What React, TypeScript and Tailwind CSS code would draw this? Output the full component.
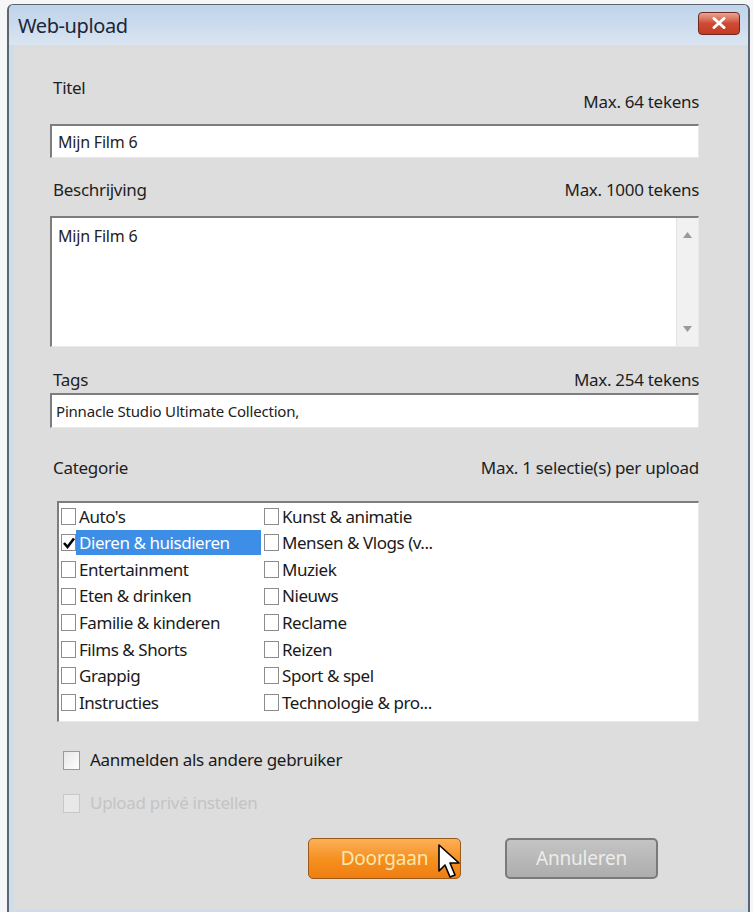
import React from "react";

const font = { fontFamily: '"Noto Sans", "Open Sans", Arial, sans-serif' };

const left = [
  "Auto's",
  "Dieren & huisdieren",
  "Entertainment",
  "Eten & drinken",
  "Familie & kinderen",
  "Films & Shorts",
  "Grappig",
  "Instructies",
];
const right = [
  "Kunst & animatie",
  "Mensen & Vlogs (v...",
  "Muziek",
  "Nieuws",
  "Reclame",
  "Reizen",
  "Sport & spel",
  "Technologie & pro...",
];

function Box({ checked = false }: { checked?: boolean }) {
  return (
    <span className="relative w-[15px] h-[17px] shrink-0 border border-[#8c8c8c] bg-white flex items-center justify-center">
      {checked && (
        <svg width="14" height="14" viewBox="0 0 14 14" className="absolute left-[0px] top-[1px]">
          <path d="M2 7 L5.5 11 L12 2.5" fill="none" stroke="#000" strokeWidth="2.6" strokeLinejoin="miter" />
        </svg>
      )}
    </span>
  );
}

function Item({ label, checked = false, selected = false }: { label: string; checked?: boolean; selected?: boolean }) {
  return (
    <div className="h-[26.6px] flex items-center">
      <Box checked={checked} />
      <span
        className={
          "h-[25px] flex items-center pl-[3px] pr-[31px] text-[17px] tracking-[-0.45px] " +
          (selected ? "bg-[#3d8ee6] text-white" : "text-[#1a1a1a]")
        }
      >
        {label}
      </span>
    </div>
  );
}

function FieldHead({ name, max, offset = false }: { name: string; max: string; offset?: boolean }) {
  return (
    <div className="flex justify-between items-start pl-[3px] text-[17px] leading-[20px] tracking-[-0.3px] text-[#1f1f1f]">
      <span>{name}</span>
      <span className={offset ? "mt-[14px]" : ""}>{max}</span>
    </div>
  );
}

const inset =
  "bg-white border-t-2 border-l-2 border-[#7d7d7d] border-r border-b border-r-[#e9e9e9] border-b-[#e9e9e9]";

export default function App() {
  return (
    <div className="w-[753px] h-[912px] bg-[#f4f6f8] pt-[4px] pl-[7px] pr-[3px] overflow-hidden" style={font}>
      <div className="relative h-[912px] border-l-2 border-r-2 border-t border-[#5d6670] rounded-t-[6px] bg-[#dddddd] flex flex-col">
        {/* title bar */}
        <div className="h-[40px] shrink-0 bg-gradient-to-b from-[#c0d4ea] via-[#cbdbed] to-[#dae5f1] flex items-center justify-between pl-[9px] pr-[8px] rounded-t-[5px]">
          <span className="text-[20px] mt-[2px] text-[#1c2636] tracking-[-0.4px]">Web-upload</span>
          <div className="w-[42px] h-[23px] -mt-[4px] rounded-[4px] border border-[#6e2a20] bg-gradient-to-b from-[#e7a595] via-[#cf4a33] to-[#c63a22] flex items-center justify-center">
            <svg width="14" height="12" viewBox="0 0 14 12">
              <path d="M2 1.5 L12 10.5 M12 1.5 L2 10.5" stroke="#fff" strokeWidth="3" strokeLinecap="round" />
            </svg>
          </div>
        </div>

        {/* body */}
        <div className="flex-1 flex flex-col pl-[36px] pr-[46px] pt-[33px] border-l-[5px] border-r-[3px] border-[#cfdceb] border-b-[6px]">
          <FieldHead name="Titel" max="Max. 64 tekens" offset />
          <div className={"mt-[12px] h-[34px] flex items-center pl-[6px] text-[16px] tracking-[-0.2px] text-[#222] " + inset}>
            Mijn Film 6
          </div>

          <div className="mt-[22px]">
            <FieldHead name="Beschrijving" max="Max. 1000 tekens" />
          </div>
          <div className={"mt-[16px] h-[131px] flex " + inset}>
            <div className="flex-1 pl-[6px] pt-[6px] text-[16px] tracking-[-0.2px] text-[#222]">Mijn Film 6</div>
            <div className="w-[22px] bg-[#f1f1f1] border-l border-[#e2e2e2] flex flex-col items-center justify-between py-[14px]">
              <svg width="9" height="6" viewBox="0 0 9 6"><path d="M0 6 L4.5 0 L9 6 Z" fill="#9a9a9a" /></svg>
              <svg width="9" height="6" viewBox="0 0 9 6"><path d="M0 0 L4.5 6 L9 0 Z" fill="#9a9a9a" /></svg>
            </div>
          </div>

          <div className="mt-[23px]">
            <FieldHead name="Tags" max="Max. 254 tekens" />
          </div>
          <div className={"mt-[3px] h-[35px] flex items-center pl-[4px] text-[15px] tracking-[-0.2px] text-[#222] " + inset}>
            Pinnacle Studio Ultimate Collection,
          </div>

          <div className="mt-[30px]">
            <FieldHead name="Categorie" max="Max. 1 selectie(s) per upload" />
          </div>
          <div className={"mt-[23px] ml-[7px] h-[221px] pl-[2px] flex " + inset}>
            <div className="w-[203px] flex flex-col">
              {left.map((l, i) => (
                <Item key={l} label={l} checked={i === 1} selected={i === 1} />
              ))}
            </div>
            <div className="flex flex-col">
              {right.map((r) => (
                <Item key={r} label={r} />
              ))}
            </div>
          </div>

          <div className="mt-[28px] ml-[13px] h-[20px] flex items-center gap-[10px] text-[17px] tracking-[-0.3px] text-[#1a1a1a]">
            <span className="w-[17px] h-[19px] border border-[#9a9a9a] bg-gradient-to-br from-[#e6e6e6] to-white" />
            <span>Aanmelden als andere gebruiker</span>
          </div>
          <div className="mt-[23px] ml-[13px] h-[20px] flex items-center gap-[10px] text-[17px] tracking-[-0.3px] text-[#c4c4c4]">
            <span className="w-[17px] h-[19px] border border-[#c8c8c8] bg-[#e8e8e8]" />
            <span>Upload privé instellen</span>
          </div>

          <div className="mt-[25px] flex gap-[44px] pl-[258px]">
            <div className="relative w-[153px] h-[41px] rounded-[5px] border border-[#9a5a18] bg-gradient-to-b from-[#fbb055] via-[#f5911f] to-[#f07e12] flex items-center justify-center text-[19px] tracking-[-0.2px] text-[#f9e7b4]">
              Doorgaan
              <svg width="26" height="38" viewBox="0 0 26 38" className="absolute left-[128px] top-[4px]">
                <path d="M2 2 L2 28 L8 22 L13 34 L18 32 L13 20 L22 20 Z" fill="#fff" stroke="#000" strokeWidth="1.6" strokeLinejoin="round" />
              </svg>
            </div>
            <div className="w-[153px] h-[41px] rounded-[5px] border-2 border-[#7a7a7a] bg-gradient-to-b from-[#c4c4c4] to-[#adadad] flex items-center justify-center text-[19px] tracking-[-0.2px] text-[#ececec]">
              Annuleren
            </div>
          </div>
        </div>
      </div>
    </div>
  );
}
